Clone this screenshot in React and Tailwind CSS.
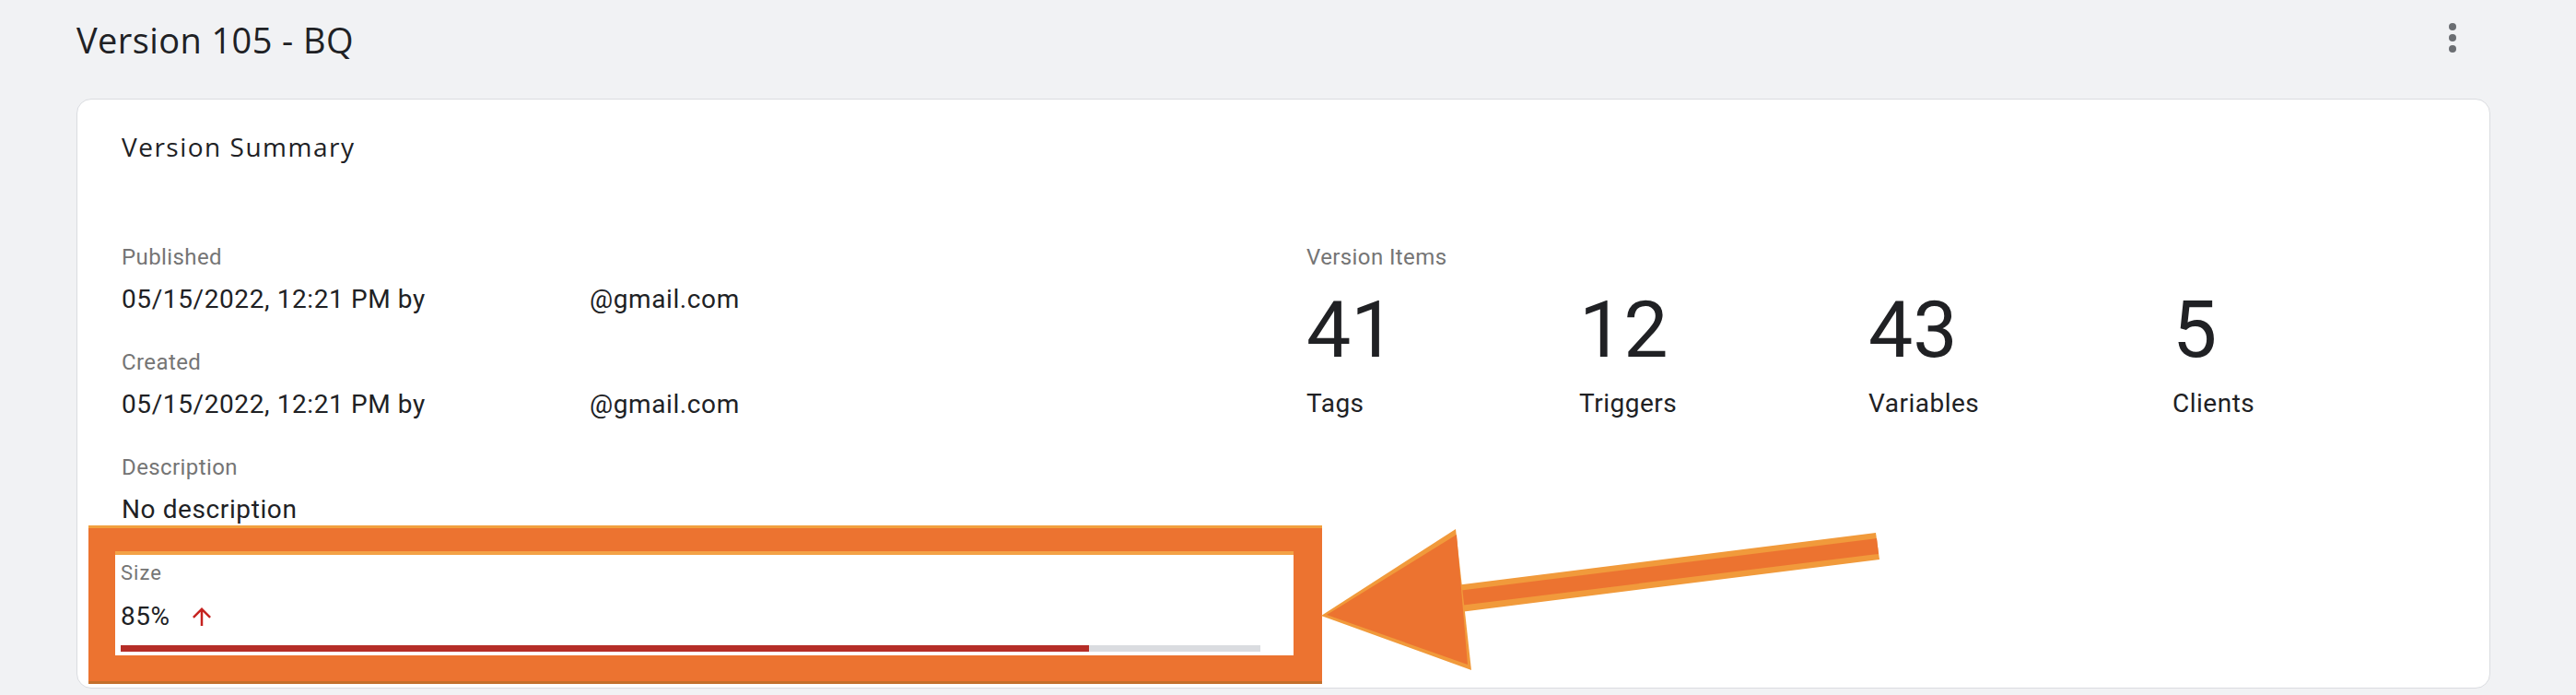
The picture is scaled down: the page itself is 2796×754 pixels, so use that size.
import React from "react";

const font = { fontFamily: "Roboto, 'Noto Sans', Arial, sans-serif" };
const heading = { fontFamily: "'Open Sans', Roboto, Arial, sans-serif" };

function Field({ label, children, first }) {
  return (
    <div className={first ? "" : "mt-[42px]"}>
      <div className="text-[24px] leading-none tracking-[0.4px] text-[#757575]">{label}</div>
      <div className="mt-[20px] text-[28px] leading-none tracking-[0.6px] text-[#202124]">{children}</div>
    </div>
  );
}

function Stat({ n, label }) {
  return (
    <div className="flex flex-col">
      <div className="text-[86px] leading-none text-[#202124]">{n}</div>
      <div className="mt-[23px] text-[28px] leading-none tracking-[0.5px] text-[#202124]">{label}</div>
    </div>
  );
}

export default function App() {
  return (
    <div
      className="relative min-h-screen w-full bg-[#f1f2f4] pl-[83px] pr-[93px] pt-[17px] pb-[9px]"
      style={font}
    >
      <div className="flex items-start justify-between">
        <h1
          className="mt-[7px] text-[38px] leading-none font-normal tracking-[0.4px] text-[#202124]"
          style={heading}
        >
          Version 105 - BQ
        </h1>
        <button className="mr-[17px] flex h-[48px] w-[48px] flex-col items-center justify-center gap-[4px]">
          <span className="h-[8px] w-[8px] rounded-full bg-[#6b6e72]" />
          <span className="h-[8px] w-[8px] rounded-full bg-[#6b6e72]" />
          <span className="h-[8px] w-[8px] rounded-full bg-[#6b6e72]" />
        </button>
      </div>

      <div className="mt-[42px] rounded-[16px] border border-[#dadce0] bg-white pl-[48px] pr-[48px] pt-[37px] pb-[7px]">
        <div
          className="text-[28px] leading-none tracking-[1.5px] text-[#202124]"
          style={heading}
        >
          Version Summary
        </div>

        <div className="mt-[94px] grid grid-cols-[1236px_1fr] gap-x-[50px]">
          <div className="flex flex-col">
            <Field label="Published" first>
              <span className="inline-block w-[508px]">05/15/2022, 12:21 PM by</span>
              <span>@gmail.com</span>
            </Field>
            <Field label="Created">
              <span className="inline-block w-[508px]">05/15/2022, 12:21 PM by</span>
              <span>@gmail.com</span>
            </Field>
            <Field label="Description">No description</Field>

            <div className="relative z-10 ml-[-36px] mt-[6px] w-[1339px] border-[#ec7330] border-t-[25px] border-l-[29px] border-r-[31px] border-b-[28px] shadow-[0_-3px_0_#f2a03e,0_3px_0_#c4702c]">
              <div className="bg-white pl-[6px] pr-[36px] pt-[13px] pb-[4px] shadow-[inset_0_4px_0_#f3a247]">
                <div className="text-[22px] leading-none tracking-[1px] text-[#757575]">Size</div>
                <div className="mt-[21px] flex items-center">
                  <span className="text-[28px] leading-none tracking-[0.5px] text-[#202124]">85%</span>
                  <svg className="ml-[20px]" width="30" height="30" viewBox="0 0 24 24">
                    <path
                      fill="#c5221f"
                      d="M4 12l1.41 1.41L11 7.83V20h2V7.83l5.58 5.59L20 12l-8-8-8 8z"
                    />
                  </svg>
                </div>
                <div className="mt-[16px] h-[7px] w-full bg-[#dadce0]">
                  <div className="h-full bg-[#b52d27]" style={{ width: "85%" }} />
                </div>
              </div>
            </div>
          </div>

          <div className="flex flex-col">
            <div className="text-[24px] leading-none tracking-[0.4px] text-[#757575]">Version Items</div>
            <div className="mt-[24px] grid grid-cols-[296px_314px_330px_1fr]">
              <Stat n="41" label="Tags" />
              <Stat n="12" label="Triggers" />
              <Stat n="43" label="Variables" />
              <Stat n="5" label="Clients" />
            </div>
          </div>
        </div>
      </div>

      <svg
        className="pointer-events-none absolute left-0 top-0 z-20"
        width="2796"
        height="754"
        viewBox="0 0 2796 754"
      >
        <polygon points="2036,578 2040,607 1585,664 1580,635" fill="#f19a3b" />
        <polygon points="2037,584 2039,601 1584,657 1582,641" fill="#ec7330" />
        <polygon points="1434,668 1580,574 1597,727" fill="#f19a3b" />
        <polygon points="1440,667 1581,580 1593,721" fill="#ec7330" />
      </svg>
    </div>
  );
}
